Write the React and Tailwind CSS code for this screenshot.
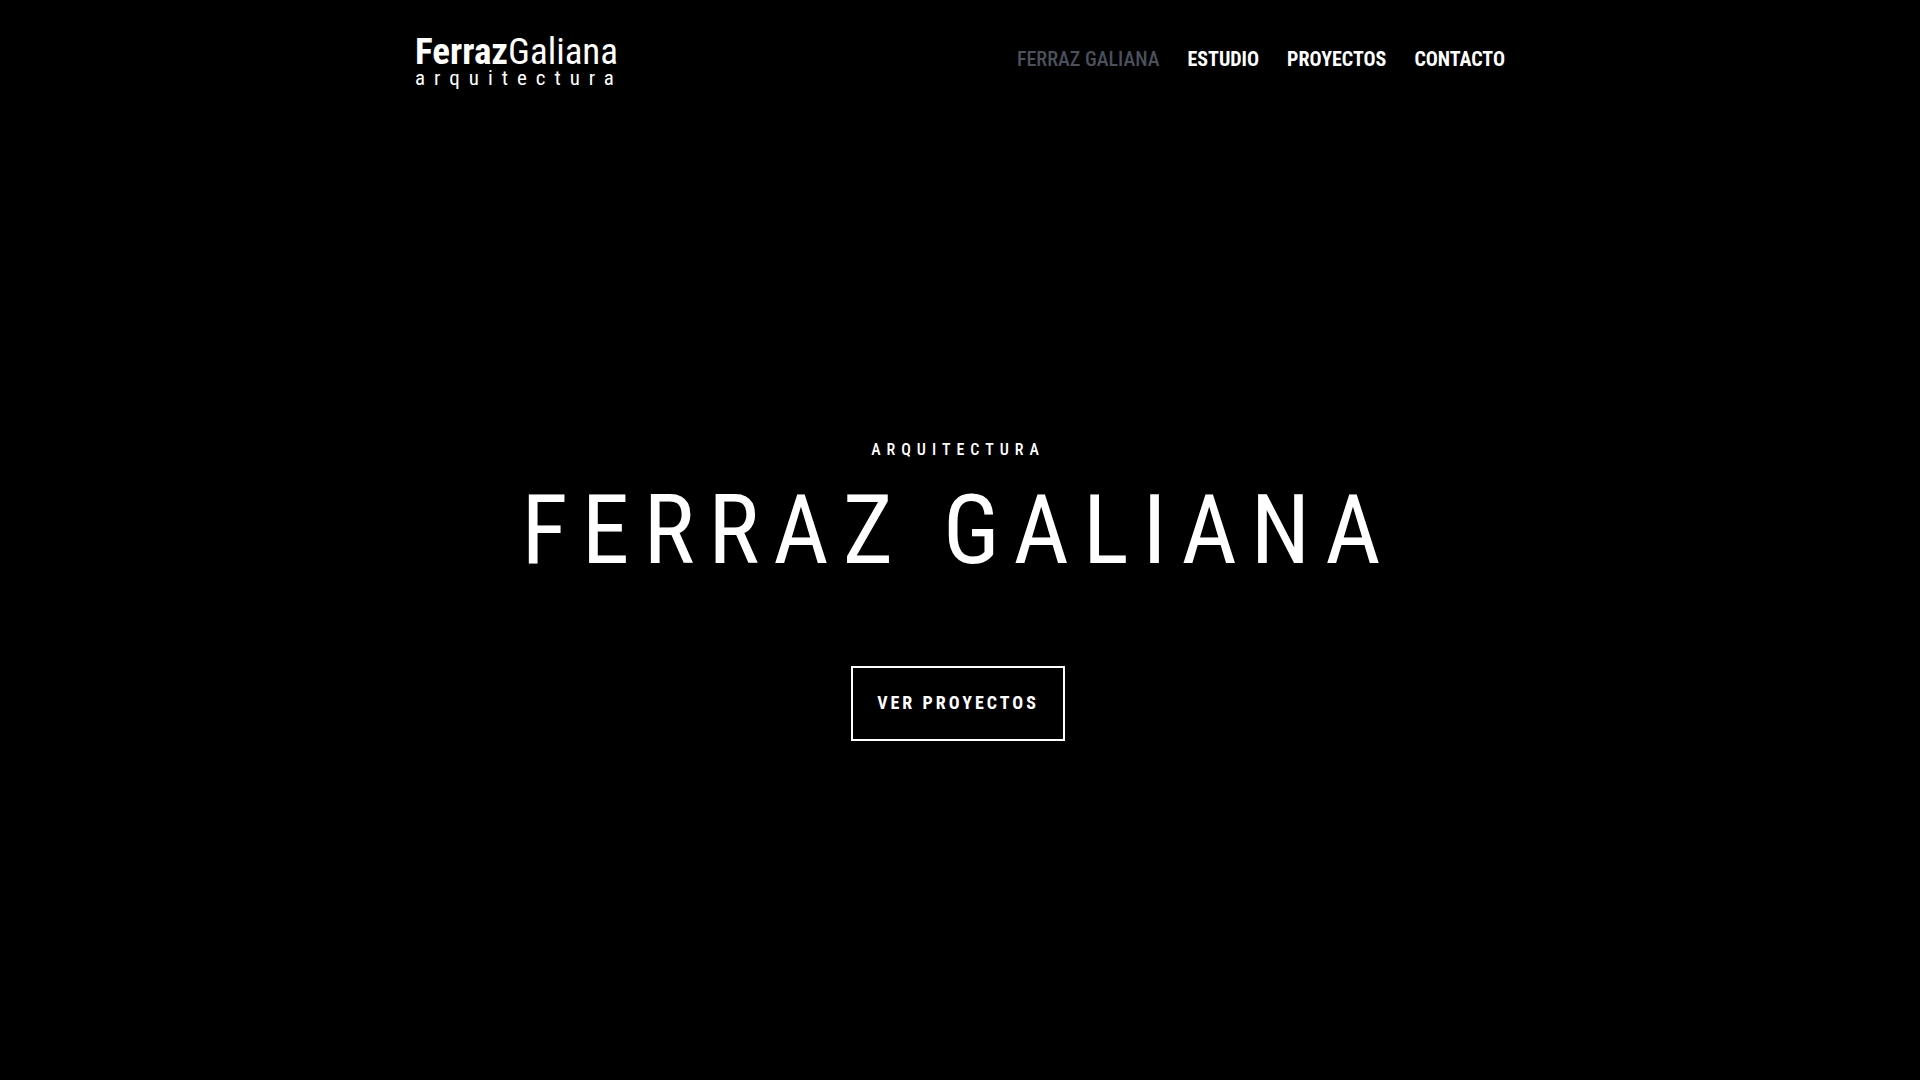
const navItems = [
  { label: 'ESTUDIO', href: '#estudio' },
  { label: 'PROYECTOS', href: '#proyectos' },
  { label: 'CONTACTO', href: '#contacto' },
];

function Logo() {
  return (
    <a href="#inicio" className="flex flex-col whitespace-nowrap">
      <span className="flex text-[37px] leading-9">
        <b>Ferraz</b>
        <span>Galiana</span>
      </span>
      <span className="text-[21px] leading-4 tracking-[9px]">arquitectura</span>
    </a>
  );
}

export default function App() {
  return (
    <div className="flex min-h-screen flex-col bg-black font-['Roboto_Condensed','Arial_Narrow','Liberation_Sans',sans-serif] text-white">
      <header className="mx-auto flex w-full max-w-[1090px] items-start justify-between pt-[34px]">
        <Logo />
        <nav className="flex items-center gap-7 pt-[13px] text-[20px] leading-6 font-bold">
          <a href="#inicio" aria-current="page" className="font-medium text-[#4a505c]">FERRAZ GALIANA</a>
          {navItems.map((item) => (
            <a key={item.href} href={item.href}>{item.label}</a>
          ))}
        </nav>
      </header>
      <main className="flex flex-1 flex-col items-center pt-[352px] pr-1 text-center">
        <p className="text-[16px] leading-6 font-medium tracking-[6px]">ARQUITECTURA</p>
        <h1 className="mt-4 text-[96px] leading-[104px] tracking-[14px]">FERRAZ GALIANA</h1>
        <a href="#proyectos" className="mt-21 border-2 border-white px-6 pt-[23px] pb-6 text-[18px] leading-6 font-bold tracking-[3px]">
          VER PROYECTOS
        </a>
      </main>
    </div>
  );
}
